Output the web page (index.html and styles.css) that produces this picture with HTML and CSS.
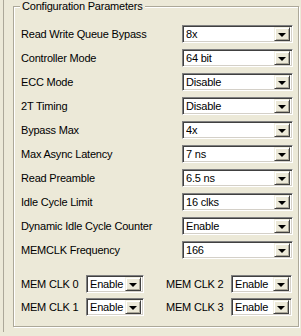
FILE: index.html
```html
<!DOCTYPE html>
<html>
<head>
<meta charset="utf-8">
<link rel="stylesheet" href="styles.css">
</head>
<body>
<div class="frame">
  <div class="group">
    <div class="legend">Configuration Parameters</div>
    <div class="rows">
      <div class="row"><span class="label">Read Write Queue Bypass</span><div class="combo wide"><span class="val">8x</span><span class="btn"><i class="tri"></i></span></div></div>
      <div class="row"><span class="label">Controller Mode</span><div class="combo wide"><span class="val">64 bit</span><span class="btn"><i class="tri"></i></span></div></div>
      <div class="row"><span class="label">ECC Mode</span><div class="combo wide"><span class="val">Disable</span><span class="btn"><i class="tri"></i></span></div></div>
      <div class="row"><span class="label">2T Timing</span><div class="combo wide"><span class="val">Disable</span><span class="btn"><i class="tri"></i></span></div></div>
      <div class="row"><span class="label">Bypass Max</span><div class="combo wide"><span class="val">4x</span><span class="btn"><i class="tri"></i></span></div></div>
      <div class="row"><span class="label">Max Async Latency</span><div class="combo wide"><span class="val">7 ns</span><span class="btn"><i class="tri"></i></span></div></div>
      <div class="row"><span class="label">Read Preamble</span><div class="combo wide"><span class="val">6.5 ns</span><span class="btn"><i class="tri"></i></span></div></div>
      <div class="row"><span class="label">Idle Cycle Limit</span><div class="combo wide"><span class="val">16 clks</span><span class="btn"><i class="tri"></i></span></div></div>
      <div class="row"><span class="label">Dynamic Idle Cycle Counter</span><div class="combo wide"><span class="val">Enable</span><span class="btn"><i class="tri"></i></span></div></div>
      <div class="row"><span class="label">MEMCLK Frequency</span><div class="combo wide"><span class="val">166</span><span class="btn"><i class="tri"></i></span></div></div>
    </div>
    <div class="clks">
      <div class="clk"><span class="label">MEM CLK 0</span><div class="combo small"><span class="val">Enable</span><span class="btn"><i class="tri"></i></span></div></div>
      <div class="clk right"><span class="label">MEM CLK 2</span><div class="combo small2"><span class="val">Enable</span><span class="btn"><i class="tri"></i></span></div></div>
      <div class="clk"><span class="label">MEM CLK 1</span><div class="combo small"><span class="val">Enable</span><span class="btn"><i class="tri"></i></span></div></div>
      <div class="clk right"><span class="label">MEM CLK 3</span><div class="combo small2"><span class="val">Enable</span><span class="btn"><i class="tri"></i></span></div></div>
    </div>
  </div>
</div>
</body>
</html>
```

FILE: styles.css
```css
html, body {
  margin: 0;
  padding: 0;
}
body {
  width: 301px;
  height: 336px;
  overflow: hidden;
  background: #ECE9D8;
  font-family: "Liberation Sans", Arial, sans-serif;
  font-size: 11px;
  letter-spacing: -0.2px;
  color: #000;
}
.frame {
  margin-left: 3px;
  height: 332px;
  border-left: 1px solid #ACA899;
  padding-left: 9px;
  padding-top: 6px;
  box-sizing: border-box;
}
.group {
  position: relative;
  width: 286px;
  height: 321px;
  box-sizing: border-box;
  border: 1px solid #ACA899;
  box-shadow: inset 1px 1px #fff, 1px 1px #fff;
  padding: 18px 0 0 7px;
}
.legend {
  position: absolute;
  top: -7px;
  left: 6px;
  padding: 0 2px;
  background: #ECE9D8;
  line-height: 13px;
}
.rows {
  display: flex;
  flex-direction: column;
  gap: 6px;
}
.row {
  display: flex;
  align-items: center;
  height: 18px;
}
.label {
  white-space: nowrap;
}
.row .label {
  width: 161px;
}
.combo {
  height: 18px;
  box-sizing: border-box;
  border: 1px solid;
  border-color: #808080 #fff #fff #808080;
  box-shadow: inset 1px 1px #404040, inset -1px -1px #D4D0C8;
  background: #fff;
  display: flex;
  align-items: center;
  padding: 2px 2px 2px 3px;
}
.wide { width: 111px; }
.small { width: 58px; }
.small2 { width: 61px; }
.val {
  flex: 1;
  line-height: 14px;
  white-space: nowrap;
  overflow: hidden;
}
.btn {
  width: 16px;
  height: 14px;
  box-sizing: border-box;
  background: #ECE9D8;
  border: 1px solid;
  border-color: #F1EFE2 #404040 #404040 #F1EFE2;
  box-shadow: inset 1px 1px #fff, inset -1px -1px #ACA899;
  display: flex;
  align-items: center;
  justify-content: center;
}
.tri {
  width: 0;
  height: 0;
  border-left: 4px solid transparent;
  border-right: 4px solid transparent;
  border-top: 4px solid #000;
  margin-top: 1px;
}
.clks {
  margin-top: 16px;
  display: grid;
  grid-template-columns: 145px auto;
  row-gap: 5px;
}
.clk {
  display: flex;
  align-items: center;
  height: 18px;
}
.clk .label {
  width: 65px;
}
```
